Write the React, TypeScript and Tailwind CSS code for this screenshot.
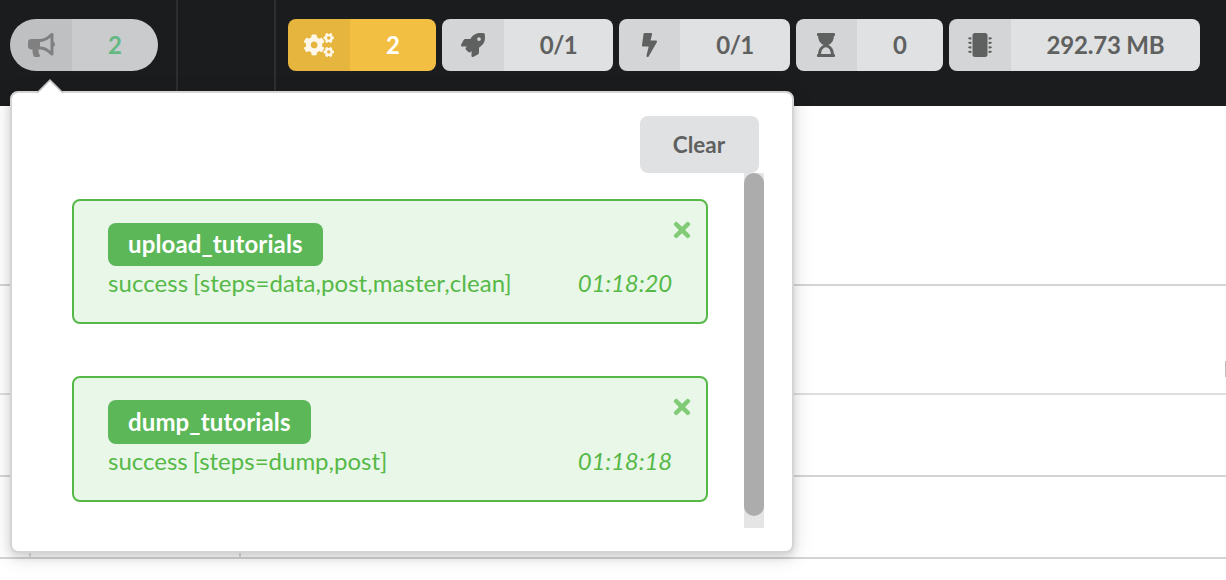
import React from "react";
import {
  FaBullhorn,
  FaCogs,
  FaHourglassStart,
  FaMicrochip,
  FaRocket,
  FaTimes,
} from "react-icons/fa";

function Bolt() {
  return (
    <svg className="h-6 w-[15px]" viewBox="0 0 320 512" fill="currentColor">
      <path d="M295.973 160H180.572L215.19 30.184C219.25 14.956 207.756 0 192 0H56C43.971 0 33.8 8.905 32.211 20.828l-31.996 240C-1.704 275.217 9.504 288 24.004 288h118.701L96.646 482.466C93.05 497.649 104.659 512 119.992 512c8.35 0 16.376-4.374 20.778-11.978l175.973-303.997c9.244-15.967-2.288-36.025-20.77-36.025z" />
    </svg>
  );
}

type StatProps = {
  icon: React.ReactNode;
  value: string;
  size: string;
  iconBox?: string;
  tone?: string;
};

function Stat({
  icon,
  value,
  size,
  iconBox = "w-[62px]",
  tone = "bg-[#e0e1e2] text-[#5f6060]",
}: StatProps) {
  return (
    <div
      className={`flex h-[52px] shrink-0 overflow-hidden rounded-lg text-2xl font-bold ${size} ${tone}`}
    >
      <div className={`flex shrink-0 items-center justify-center bg-black/5 ${iconBox}`}>{icon}</div>
      <div className="flex flex-1 items-center justify-center">{value}</div>
    </div>
  );
}

type NoticeProps = {
  name: string;
  detail: string;
  time: string;
  box?: string;
  label?: string;
  row?: string;
};

function Notice({
  name,
  detail,
  time,
  box = "h-[125px]",
  label = "h-[43px] pb-0.5",
  row = "h-[33px] tracking-[0.06px]",
}: NoticeProps) {
  return (
    <div
      className={`relative w-[636px] shrink-0 rounded-lg border-2 border-[#56b947] bg-[#e9f7e9] pt-[22px] pr-[34px] pl-[34px] text-[#56b947] ${box}`}
    >
      <FaTimes className="absolute top-[17px] right-3 size-6 opacity-70" />
      <div className="flex">
        <span
          className={`flex items-center rounded-lg bg-[#5bb757] px-5 text-2xl font-bold tracking-[0.12px] text-white ${label}`}
        >
          {name}
        </span>
      </div>
      <div className={`flex items-center justify-between text-2xl ${row}`}>
        <span className="[word-spacing:-1.3px]">{detail}</span>
        <em className="tracking-[-0.15px]">{time}</em>
      </div>
    </div>
  );
}

export default function App() {
  return (
    <div className="relative h-[580px] w-[1226px] overflow-hidden bg-white font-['Lato',sans-serif]">
      <header className="flex h-[106px] bg-[#1b1c1d]">
        <div className="w-[178px] border-r-2 border-[#2d2e2f] pt-[19px] pl-[10px]">
          <div className="flex h-[52px] w-[148px] overflow-hidden rounded-full bg-[#cacbcd] text-2xl font-bold">
            <div className="flex w-[62px] items-center justify-center bg-black/5 text-[#808080]">
              <FaBullhorn className="h-6 w-[27px]" />
            </div>
            <div className="flex flex-1 items-center justify-center text-[#64b883]">2</div>
          </div>
        </div>
        <div className="w-[98px] border-r-2 border-[#2d2e2f]" />
        <div className="flex gap-1.5 pt-[19px] pl-3">
          <Stat
            size="w-[148px]"
            tone="bg-[#f2bf42] text-white"
            icon={<FaCogs className="h-6 w-[30px] text-[#fff8ea]" />}
            value="2"
          />
          <Stat
            size="w-[171px] tracking-[-0.5px]"
            icon={<FaRocket className="size-6" />}
            value="0/1"
          />
          <Stat
            size="w-[171px] tracking-[-0.5px]"
            iconBox="w-[61px]"
            icon={<Bolt />}
            value="0/1"
          />
          <Stat
            size="w-[147px]"
            iconBox="w-[61px] pr-px"
            icon={<FaHourglassStart className="size-6" />}
            value="0"
          />
          <Stat
            size="w-[251px] tracking-[-0.2px]"
            icon={<FaMicrochip className="size-6" />}
            value="292.73 MB"
          />
        </div>
      </header>

      <main>
        <div className="h-[180px] border-b-2 border-[#d4d4d5]" />
        <div className="flex h-[109px] items-start justify-end border-b-2 border-[#dedede] pt-[75px]">
          <div className="h-4 w-px bg-[#bdbdbd]" />
        </div>
        <div className="h-[82px] border-b-2 border-[#d4d4d5]" />
        <div className="flex h-[82px] border-b-2 border-[#d4d4d5]">
          <div className="w-[31px] border-r-2 border-[#dedede]" />
          <div className="w-[210px] border-r-2 border-[#dedede]" />
        </div>
      </main>

      <section className="absolute top-[91px] left-[10px] h-[462px] w-[784px] rounded-lg border-2 border-[#d4d4d5] bg-white shadow-[0_4px_8px_0_rgba(34,36,38,0.12),0_4px_20px_0_rgba(34,36,38,0.15)]">
        <svg className="absolute -top-[15px] left-[24px]" width="28" height="18" viewBox="0 0 28 18">
          <path d="M1 15.5 14 2.5 27 15.5V18H1Z" fill="#fff" />
          <path d="M1 15 14 2 27 15" fill="none" stroke="#c4c4c5" strokeWidth="1.5" />
        </svg>
        <div className="flex h-20 justify-end pt-[23px] pr-[33px]">
          <button className="h-[57px] w-[119px] rounded-lg bg-[#e0e1e2] pr-px text-[22.5px] font-bold text-[#5f6060]">
            Clear
          </button>
        </div>
        <div className="flex h-[355px] justify-between pr-7 pl-[60px]">
          <div className="flex flex-col gap-[52px] pt-[26px]">
            <Notice
              name="upload_tutorials"
              detail="success [steps=data,post,master,clean]"
              time="01:18:20"
            />
            <Notice
              name="dump_tutorials"
              detail="success [steps=dump,post]"
              time="01:18:18"
              box="h-[126px]"
              label="h-11"
              row="h-[34px]"
            />
          </div>
          <div className="w-5 bg-[#e5e5e5]">
            <div className="h-[343px] rounded-[10px] bg-[#acacac]" />
          </div>
        </div>
      </section>
    </div>
  );
}
